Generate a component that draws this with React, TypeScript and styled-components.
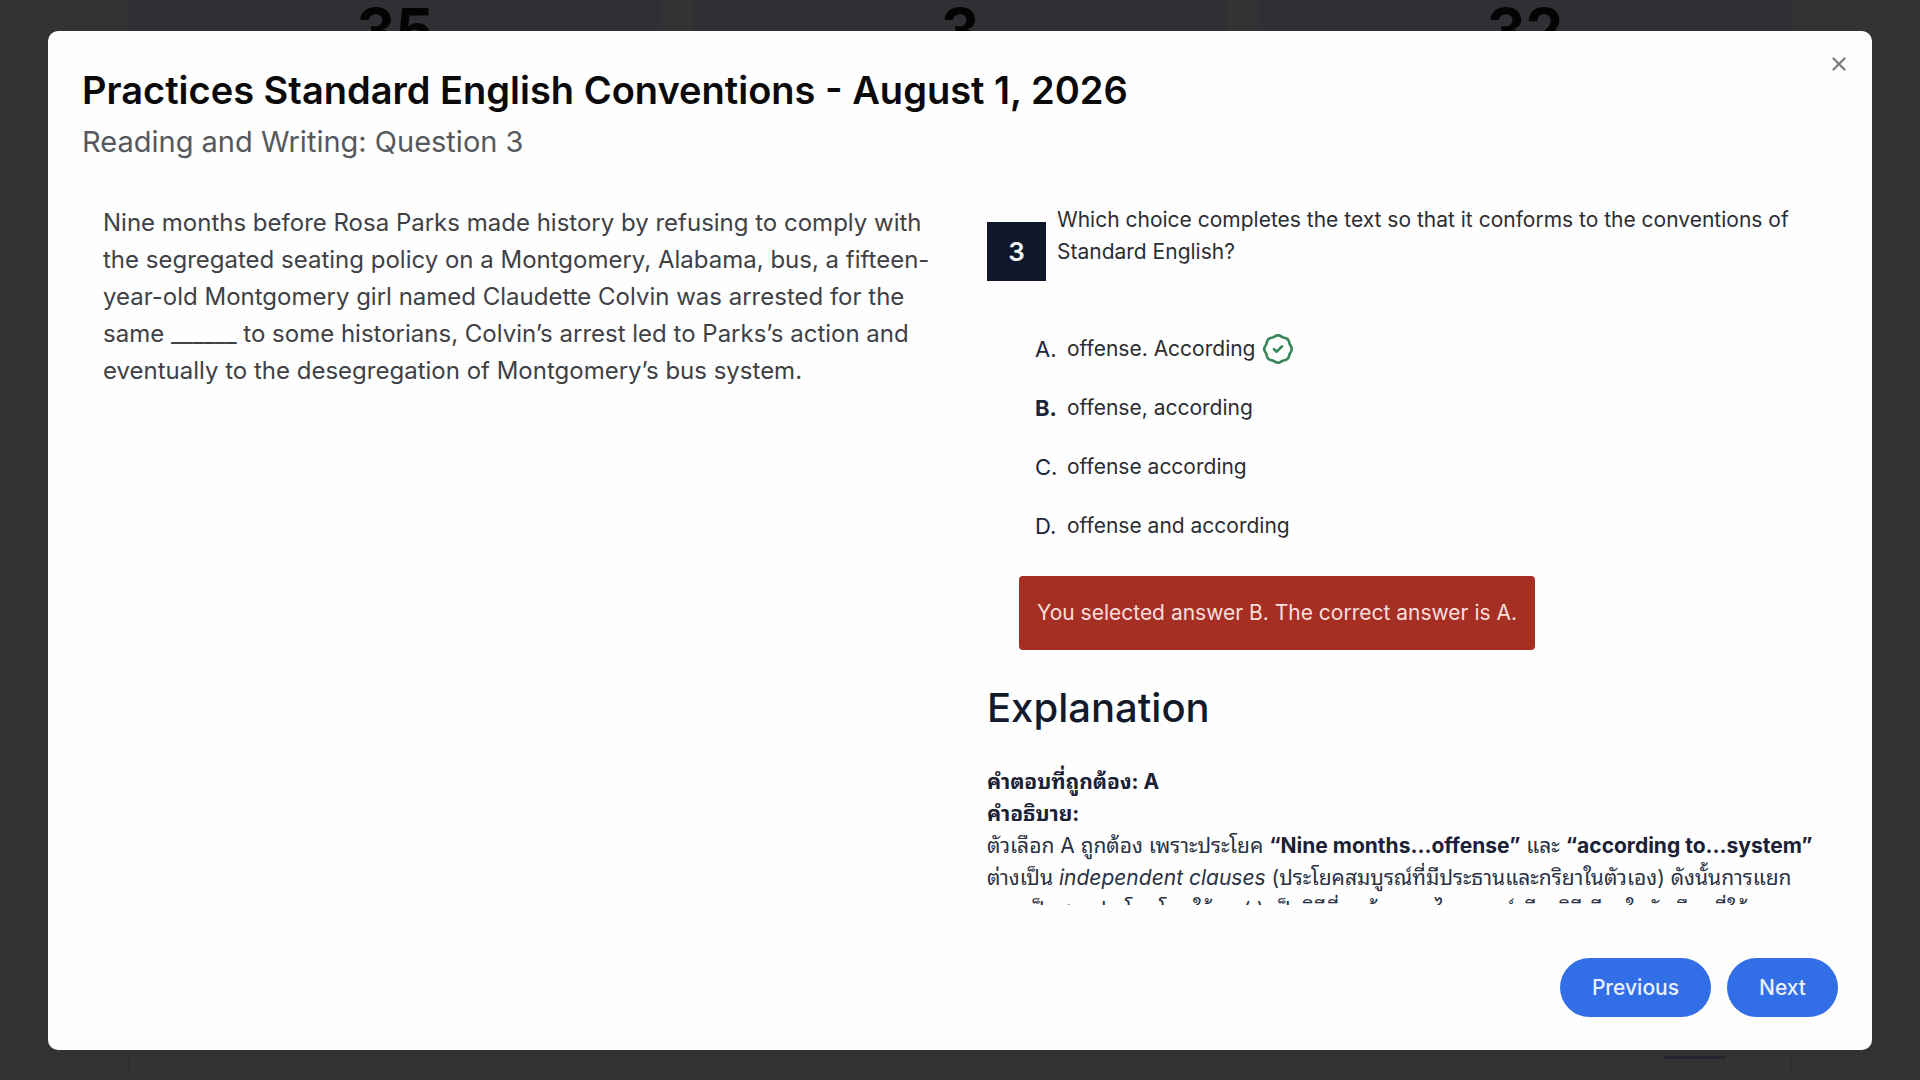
import React from "react";
import styled, { createGlobalStyle } from "styled-components";
import { X } from "lucide-react";

const GlobalStyle = createGlobalStyle`
  *, *::before, *::after { box-sizing: border-box; }
  body {
    margin: 0;
    background: #333333;
    font-family: Inter, "Noto Sans Thai Looped", "Noto Sans Thai", "Liberation Sans", sans-serif;
    color: #0f172a;
  }
  h1, h2, h3, p, ol { margin: 0; padding: 0; font-weight: inherit; }
`;

const Page = styled.div`
  height: 100vh;
  overflow: hidden;
  display: flex;
  flex-direction: column;
  gap: 32px;
  padding: 0 128px 4px;
`;

const Stats = styled.section`
  display: grid;
  grid-template-columns: repeat(3, 1fr);
  gap: 31px;
`;

const StatCard = styled.div`
  background: #2f3034;
  text-align: center;
  font-size: 60px;
  line-height: 60px;
  font-weight: 700;
  color: #040404;
  padding-bottom: 32px;
`;

const History = styled.section`
  flex: 1;
  display: flex;
  align-items: flex-end;
  justify-content: flex-end;
  border: 1px solid #2d2d2d;
  border-radius: 4px;
  padding: 0 66px 16px;
`;

const HistoryLink = styled.a`
  font-size: 18px;
  line-height: 32px;
  color: #22252d;
  text-decoration: none;
  border-bottom: 3px solid #22252d;
`;

const Dialog = styled.div`
  position: fixed;
  inset: 31px 48px 30px;
  display: flex;
  flex-direction: column;
  padding: 36px 34px 33px;
  background: #fefefe;
  border-radius: 10px;
`;

const CloseButton = styled.button`
  position: absolute;
  top: 21px;
  right: 21px;
  width: 24px;
  height: 24px;
  display: grid;
  place-items: center;
  padding: 0;
  border: 0;
  background: none;
  color: #7b7b7b;
`;

const Title = styled.h1`
  font-size: 38px;
  line-height: 46px;
  font-weight: 600;
  color: #0a0a0b;
`;

const Subtitle = styled.p`
  font-size: 29px;
  line-height: 40px;
  margin-top: 9px;
  color: #57585c;
`;

const Columns = styled.div`
  flex: 1;
  min-height: 0;
  display: grid;
  grid-template-columns: 1fr 1fr;
  margin-top: 42px;
`;

const Passage = styled.p`
  padding: 0 21px;
  font-size: 24px;
  line-height: 37px;
  color: #404145;
  white-space: nowrap;
`;

const QuestionPane = styled.div`
  overflow: hidden;
  padding: 0 27px;
`;

const QuestionRow = styled.div`
  display: flex;
  align-items: center;
  gap: 11px;
`;

const QuestionNumber = styled.div`
  flex: none;
  width: 59px;
  height: 59px;
  display: grid;
  place-items: center;
  background: #0f172a;
  color: #f1f3f6;
  font-size: 26px;
  font-weight: 600;
`;

const QuestionText = styled.p`
  font-size: 21px;
  line-height: 32px;
  padding-bottom: 30px;
  color: #2c2d31;
  white-space: nowrap;
`;

const Choices = styled.ol`
  list-style: none;
  margin: 21px 0;
  padding-left: 48px;
`;

const Choice = styled.li`
  height: 59px;
  display: flex;
  align-items: center;
  font-size: 21px;
  color: #2c2d31;
`;

const ChoiceLetter = styled.span<{ $selected: boolean }>`
  width: 32px;
  font-size: 22px;
  font-weight: ${(p) => (p.$selected ? 700 : 400)};
  color: #1c2438;
`;

const BadgeSvg = styled.svg`
  width: 32px;
  height: 32px;
  margin-left: 6px;
  fill: none;
  stroke: #3a8558;
  stroke-width: 2;
  stroke-linecap: round;
  stroke-linejoin: round;
`;

const Result = styled.p`
  width: fit-content;
  margin-left: 32px;
  padding: 20px 18px;
  border-radius: 4px;
  background: #a62f24;
  color: #f9dedb;
  font-size: 21px;
  line-height: 34px;
`;

const ExplanationTitle = styled.h2`
  margin: 34px 0;
  font-size: 40px;
  line-height: 48px;
  font-weight: 500;
  color: #131a2c;
`;

const Explanation = styled.p`
  font-size: 21px;
  line-height: 32px;
  color: #2a3142;
  white-space: nowrap;

  strong { font-weight: 700; color: #1a2135; }
`;

const Footer = styled.footer`
  display: flex;
  justify-content: flex-end;
  gap: 16px;
  margin-top: 53px;
`;

const PillButton = styled.button`
  height: 59px;
  padding: 0 32px;
  border: 0;
  border-radius: 30px;
  background: #326ee6;
  color: #eaf1fe;
  font-family: inherit;
  font-size: 21px;
  font-weight: 500;
`;

// Outline of the correct-answer seal: a circle with eight shallow lobes.
const sealPoints = Array.from({ length: 96 }, (_, i) => {
  const angle = (i / 96) * Math.PI * 2;
  const radius = 9.9 + 0.4 * Math.cos(angle * 8);
  return `${(12 + radius * Math.cos(angle)).toFixed(2)},${(12 + radius * Math.sin(angle)).toFixed(2)}`;
}).join(" ");

function CorrectBadge() {
  return (
    <BadgeSvg viewBox="0 0 24 24" role="img" aria-label="Correct answer">
      <polygon points={sealPoints} />
      <path d="m9 12.2 2 1.8 4-4" />
    </BadgeSvg>
  );
}

const choices = [
  { letter: "A", text: "offense. According" },
  { letter: "B", text: "offense, according" },
  { letter: "C", text: "offense according" },
  { letter: "D", text: "offense and according" },
];
const selected = "B";
const correct = "A";

export default function App() {
  return (
    <>
      <GlobalStyle />
      <Page>
        <Stats>
          <StatCard>35</StatCard>
          <StatCard>3</StatCard>
          <StatCard>32</StatCard>
        </Stats>
        <History>
          <HistoryLink href="#review">Review</HistoryLink>
        </History>
      </Page>

      <Dialog role="dialog" aria-modal="true" aria-labelledby="dialog-title">
        <CloseButton type="button" aria-label="Close">
          <X size={22} strokeWidth={2.5} />
        </CloseButton>
        <Title id="dialog-title">Practices Standard English Conventions - August 1, 2026</Title>
        <Subtitle>Reading and Writing: Question 3</Subtitle>

        <Columns>
          <Passage>
            Nine months before Rosa Parks made history by refusing to comply with
            <br />
            the segregated seating policy on a Montgomery, Alabama, bus, a fifteen-
            <br />
            year-old Montgomery girl named Claudette Colvin was arrested for the
            <br />
            same ______ to some historians, Colvin’s arrest led to Parks’s action and
            <br />
            eventually to the desegregation of Montgomery’s bus system.
          </Passage>

          <QuestionPane>
            <QuestionRow>
              <QuestionNumber>3</QuestionNumber>
              <QuestionText>
                Which choice completes the text so that it conforms to the conventions of
                <br />
                Standard English?
              </QuestionText>
            </QuestionRow>

            <Choices>
              {choices.map((c) => (
                <Choice key={c.letter}>
                  <ChoiceLetter $selected={c.letter === selected}>{c.letter}.</ChoiceLetter>
                  {c.text}
                  {c.letter === correct && <CorrectBadge />}
                </Choice>
              ))}
            </Choices>

            <Result>
              You selected answer {selected}. The correct answer is {correct}.
            </Result>

            <ExplanationTitle>Explanation</ExplanationTitle>
            <Explanation lang="th">
              <strong>คำตอบที่ถูกต้อง: A</strong>
              <br />
              <strong>คำอธิบาย:</strong>
              <br />
              ตัวเลือก A ถูกต้อง เพราะประโยค <strong>“Nine months…offense”</strong> และ{" "}
              <strong>“according to…system”</strong>
              <br />
              ต่างเป็น <em>independent clauses</em> (ประโยคสมบูรณ์ที่มีประธานและกริยาในตัวเอง) ดังนั้นการแยก
              <br />
              ออกเป็นสองประโยคโดยใช้จุด (.) เป็นวิธีที่ถูกต้องทางไวยากรณ์เพียงวิธีเดียวในตัวเลือกที่ให้มา
            </Explanation>
          </QuestionPane>
        </Columns>

        <Footer>
          <PillButton type="button">Previous</PillButton>
          <PillButton type="button">Next</PillButton>
        </Footer>
      </Dialog>
    </>
  );
}
